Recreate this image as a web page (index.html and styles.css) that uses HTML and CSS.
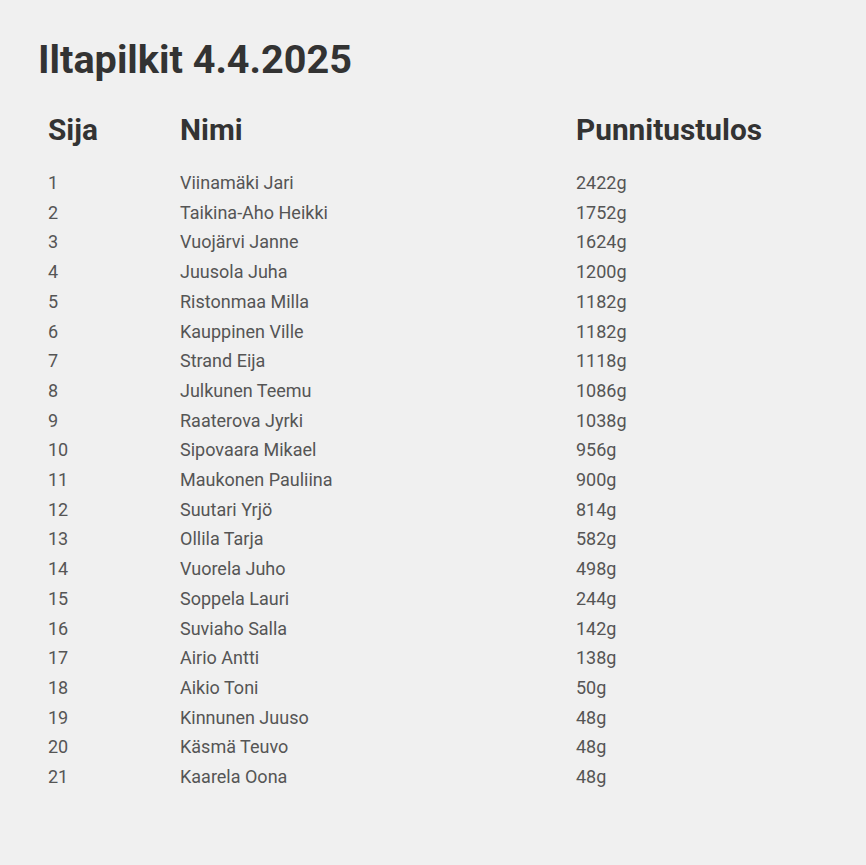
FILE: index.html
```html
<!DOCTYPE html>
<html lang="fi">
<head>
<meta charset="utf-8">
<title>Iltapilkit 4.4.2025</title>
<link rel="stylesheet" href="styles.css">
</head>
<body>
<main class="page">
  <h1 class="title">Iltapilkit 4.4.2025</h1>
  <table class="results">
    <thead>
      <tr><th class="col-rank">Sija</th><th class="col-name">Nimi</th><th class="col-weight">Punnitustulos</th></tr>
    </thead>
    <tbody>
      <tr><td>1</td><td>Viinamäki Jari</td><td>2422g</td></tr>
      <tr><td>2</td><td>Taikina-Aho Heikki</td><td>1752g</td></tr>
      <tr><td>3</td><td>Vuojärvi Janne</td><td>1624g</td></tr>
      <tr><td>4</td><td>Juusola Juha</td><td>1200g</td></tr>
      <tr><td>5</td><td>Ristonmaa Milla</td><td>1182g</td></tr>
      <tr><td>6</td><td>Kauppinen Ville</td><td>1182g</td></tr>
      <tr><td>7</td><td>Strand Eija</td><td>1118g</td></tr>
      <tr><td>8</td><td>Julkunen Teemu</td><td>1086g</td></tr>
      <tr><td>9</td><td>Raaterova Jyrki</td><td>1038g</td></tr>
      <tr><td>10</td><td>Sipovaara Mikael</td><td>956g</td></tr>
      <tr><td>11</td><td>Maukonen Pauliina</td><td>900g</td></tr>
      <tr><td>12</td><td>Suutari Yrjö</td><td>814g</td></tr>
      <tr><td>13</td><td>Ollila Tarja</td><td>582g</td></tr>
      <tr><td>14</td><td>Vuorela Juho</td><td>498g</td></tr>
      <tr><td>15</td><td>Soppela Lauri</td><td>244g</td></tr>
      <tr><td>16</td><td>Suviaho Salla</td><td>142g</td></tr>
      <tr><td>17</td><td>Airio Antti</td><td>138g</td></tr>
      <tr><td>18</td><td>Aikio Toni</td><td>50g</td></tr>
      <tr><td>19</td><td>Kinnunen Juuso</td><td>48g</td></tr>
      <tr><td>20</td><td>Käsmä Teuvo</td><td>48g</td></tr>
      <tr><td>21</td><td>Kaarela Oona</td><td>48g</td></tr>
    </tbody>
  </table>
</main>
</body>
</html>
```
FILE: styles.css
```css
html, body {
  margin: 0;
  padding: 0;
  background: #f0f0f0;
}
body {
  font-family: Roboto, "Liberation Sans", sans-serif;
  color: #333;
}
.page {
  padding: 36px 38px 40px;
}
.title {
  margin: 0 0 28px;
  font-size: 39.6px;
  font-weight: 700;
  line-height: 48px;
  color: #333;
}
.results {
  width: 100%;
  border-collapse: collapse;
}
.results th {
  text-align: left;
  font-size: 29.8px;
  font-weight: 700;
  color: #333;
  padding: 0 10px 20px;
  line-height: 36px;
}
.col-rank { width: 112px; }
.col-name { width: 376px; }
.results td {
  font-size: 18px;
  color: #555;
  padding: 4px 10px;
  line-height: 21.7px;
}
```
